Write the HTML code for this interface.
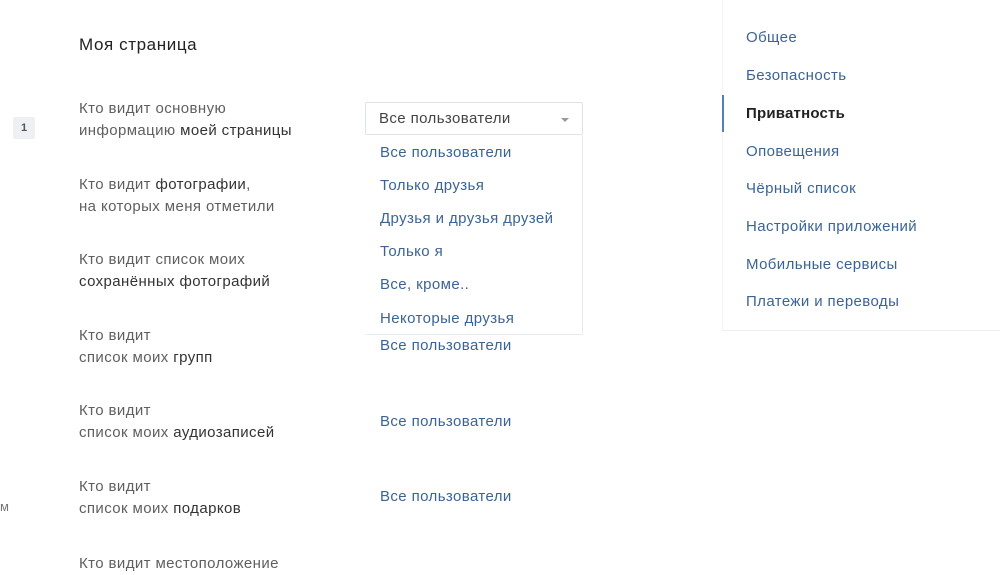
<!DOCTYPE html>
<html><head><meta charset="utf-8"><style>
body{margin:0;width:1000px;height:563px;background:#fff;font-family:"Liberation Sans",sans-serif;position:relative;overflow:hidden;font-size:15px;letter-spacing:0.4px}
.a{position:absolute;white-space:nowrap}
.l{color:#5f5f5f;line-height:22px;left:79px}
.l b{font-weight:normal;color:#333}
.v{color:#3b6496;left:380px}
.m{color:#3b6496;left:746px}
</style></head><body>
<div class="a" style="left:79px;top:35px;font-size:17px;color:#222;letter-spacing:0.6px">Моя страница</div>
<div class="a" style="left:13px;top:117px;width:22px;height:22px;background:#eef0f4;border-radius:2px;color:#555;font-size:11px;text-align:center;line-height:22px;font-weight:bold;letter-spacing:0">1</div>
<div class="a l" style="top:98px">Кто видит основную<br>информацию <b>моей страницы</b></div>
<div class="a l" style="top:174px">Кто видит <b>фотографии</b>,<br>на которых меня отметили</div>
<div class="a l" style="top:249px">Кто видит список моих<br><b>сохранённых фотографий</b></div>
<div class="a l" style="top:325px">Кто видит<br>список моих <b>групп</b></div>
<div class="a l" style="top:400px">Кто видит<br>список моих <b>аудиозаписей</b></div>
<div class="a l" style="top:476px">Кто видит<br>список моих <b>подарков</b></div>
<div class="a l" style="top:553px">Кто видит местоположение</div>
<div class="a" style="left:0;top:499px;color:#777;font-size:13px">м</div>
<div class="a" style="left:365px;top:102px;width:218px;height:33px;border:1px solid #dfe3ea;border-radius:2px;box-sizing:border-box"></div>
<div class="a" style="left:379px;top:110px;color:#444">Все пользователи</div>
<div class="a" style="left:561px;top:118px;width:0;height:0;border-left:4px solid transparent;border-right:4px solid transparent;border-top:4px solid #999"></div>
<div class="a" style="left:365px;top:135px;width:218px;height:200px;border-right:1px solid #e8ebef;border-bottom:1px solid #e8ebef;box-sizing:border-box"></div>
<div class="a v" style="top:144px">Все пользователи</div>
<div class="a v" style="top:177px">Только друзья</div>
<div class="a v" style="top:210px">Друзья и друзья друзей</div>
<div class="a v" style="top:243px">Только я</div>
<div class="a v" style="top:276px">Все, кроме..</div>
<div class="a v" style="top:310px">Некоторые друзья</div>
<div class="a v" style="top:337px">Все пользователи</div>
<div class="a v" style="top:413px">Все пользователи</div>
<div class="a v" style="top:488px">Все пользователи</div>
<div class="a" style="left:722px;top:0;width:278px;height:330px;border-bottom:1px solid #eceef2;border-left:1px solid #f3f4f6"></div>
<div class="a" style="left:722px;top:95px;width:2px;height:37px;background:#5181b8"></div>
<div class="a m" style="top:29px">Общее</div>
<div class="a m" style="top:67px">Безопасность</div>
<div class="a m" style="top:105px;color:#222;font-weight:bold;letter-spacing:0.2px">Приватность</div>
<div class="a m" style="top:143px">Оповещения</div>
<div class="a m" style="top:180px">Чёрный список</div>
<div class="a m" style="top:218px">Настройки приложений</div>
<div class="a m" style="top:256px">Мобильные сервисы</div>
<div class="a m" style="top:293px">Платежи и переводы</div>
</body></html>
